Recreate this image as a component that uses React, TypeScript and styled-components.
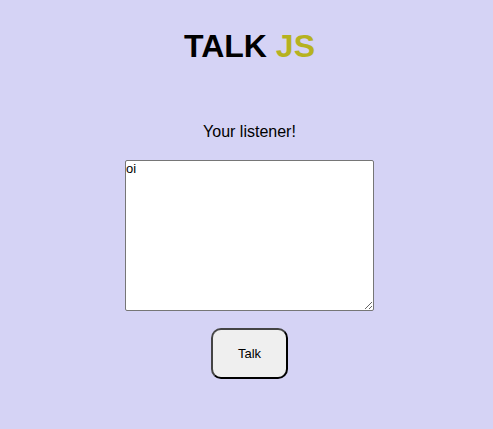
import React, { useState } from "react";
import styled, { createGlobalStyle } from "styled-components";

const Global = createGlobalStyle`
  html, body { margin: 0; padding: 0; }
  body { background: #d5d3f5; font-family: "Liberation Sans", Arial, sans-serif; }
`;

const Page = styled.main`
  display: flex;
  flex-direction: column;
  align-items: center;
  min-height: 429px;
  padding: 28px 0 0 6px;
  box-sizing: border-box;
`;

const Title = styled.h1`
  margin: 0;
  font-size: 32px;
  font-weight: bold;
  line-height: 36px;
  color: #000;
`;

const Accent = styled.span`
  color: #b6b21f;
`;

const Subtitle = styled.p`
  margin: 59px 0 0;
  font-size: 16px;
  line-height: 18px;
  color: #000;
`;

const Area = styled.textarea`
  margin-top: 19px;
  width: 249px;
  height: 151px;
  box-sizing: border-box;
  border: 1px solid #767676;
  border-radius: 2px;
  padding: 0;
  font-family: "Liberation Sans", Arial, sans-serif;
  font-size: 13px;
  background: #fff;
  resize: both;
`;

const Button = styled.button`
  margin-top: 17px;
  width: 77px;
  height: 51px;
  border-radius: 10px;
  border: 2px outset #444;
  background: #efefef;
  font-family: "Liberation Sans", Arial, sans-serif;
  font-size: 13px;
  color: #000;
`;

export default function App() {
  const [text, setText] = useState("oi");
  return (
    <>
      <Global />
      <Page>
        <Title>
          TALK <Accent>JS</Accent>
        </Title>
        <Subtitle>Your listener!</Subtitle>
        <Area value={text} onChange={(e) => setText(e.target.value)} />
        <Button>Talk</Button>
      </Page>
    </>
  );
}
